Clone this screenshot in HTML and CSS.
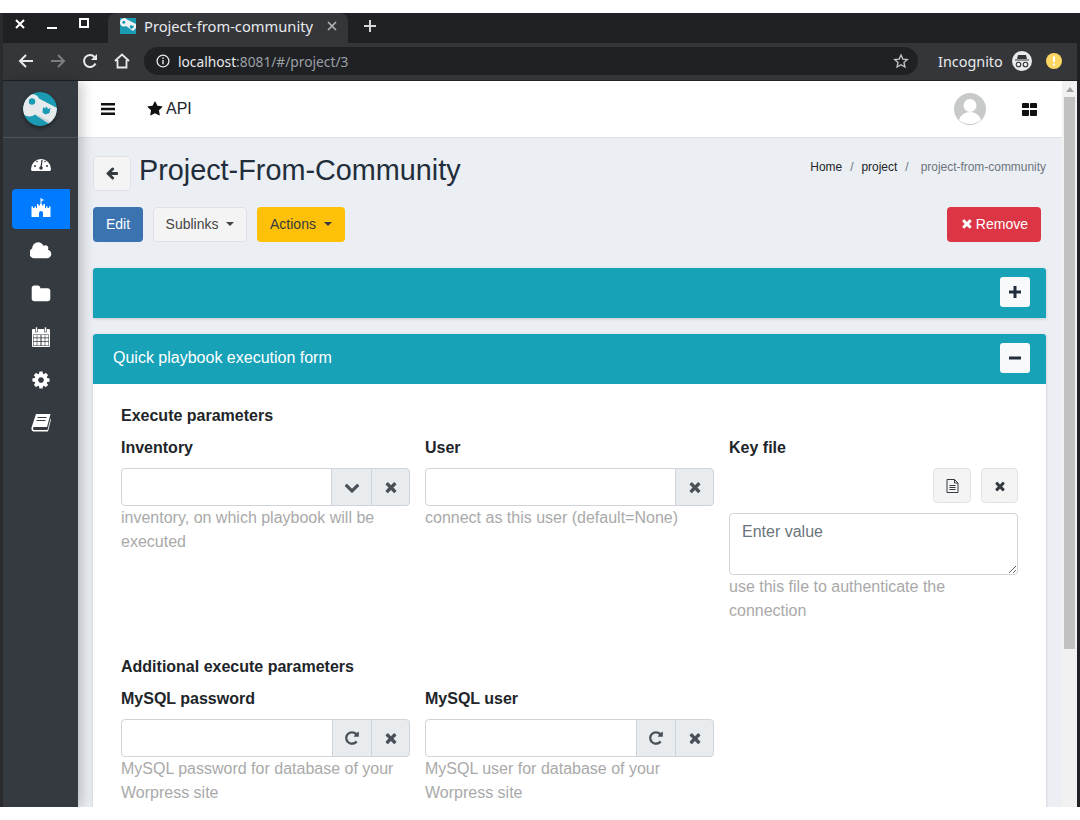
FILE: index.html

```html
<!DOCTYPE html>
<html lang="en">
<head>
<meta charset="utf-8"/>
<meta content="width=device-width, initial-scale=1.0" name="viewport"/>
<title>Project-from-community</title>
<link rel="stylesheet" href="styles.css">
</head>
<body>
<svg class="defs" width="0" height="0">
  <clipPath id="logo-clip"><circle cx="17" cy="17" r="17"/></clipPath>
  <symbol id="i-times" viewBox="0 0 1792 1792"><path d="M1490 1322q0 40-28 68l-136 136q-28 28-68 28t-68-28l-294-294-294 294q-28 28-68 28t-68-28l-136-136q-28-28-28-68t28-68l294-294-294-294q-28-28-28-68t28-68l136-136q28-28 68-28t68 28l294 294 294-294q28-28 68-28t68 28l136 136q28 28 28 68t-28 68l-294 294 294 294q28 28 28 68z"/></symbol>
  <symbol id="i-repeat" viewBox="0 0 1792 1792"><path d="M1664 256v448q0 26-19 45t-45 19h-448q-42 0-59-40-17-39 14-69l138-138q-148-137-349-137-104 0-198.500 40.500t-163.500 109.500-109.500 163.500-40.500 198.500 40.500 198.500 109.500 163.500 163.500 109.500 198.500 40.500q119 0 225-52t179-147q7-10 23-12 15 0 25 9l137 138q9 8 9.500 20.500t-7.500 22.500q-109 132-264 204.500t-327 72.500q-156 0-298-61t-245-164-164-245-61-298 61-298 164-245 245-164 298-61q147 0 284.500 55.500t244.500 156.500l130-129q29-31 70-14 39 17 39 59z"/></symbol>
  <symbol id="i-chevron" viewBox="0 0 1792 1792"><path d="M1683 808l-742 741q-19 19-45 19t-45-19l-742-741q-19-19-19-45.500t19-45.500l166-165q19-19 45-19t45 19l531 531 531-531q19-19 45-19t45 19l166 165q19 19 19 45.500t-19 45.500z"/></symbol>
  <symbol id="i-key" viewBox="0 0 34 34">
    <circle cx="17" cy="17" r="17" fill="#1a9bb3"/>
    <g clip-path="url(#logo-clip)">
      <path d="M1 10a8 8 0 0 1 15-3.500L36 17v3L28 33 12 22.500A8 8 0 0 1 1 10z" fill="#e6eaec"/>
      <path d="M36 20L28 33 14 24l1-1 13 7 7-12z" fill="#c9d3d6"/>
    </g>
    <circle cx="9" cy="9.500" r="3.200" fill="#1a9bb3"/>
    <path d="M20 15l2 1.500 1.500-2 1.500 2.500 2.500-1-1 5-4 1.500-3-2z" fill="#1a9bb3"/>
  </symbol>
</svg>

<div class="window">
  <div class="tabbar">
    <div class="win-controls">
      <svg width="12" height="12" viewBox="0 0 12 12"><path d="M2 2l8 8M10 2l-8 8" stroke="#fff" stroke-width="2"/></svg>
      <svg width="12" height="12" viewBox="0 0 12 12"><path d="M1 10h10" stroke="#fff" stroke-width="2"/></svg>
      <svg width="12" height="12" viewBox="0 0 12 12"><rect x="2" y="1" width="8" height="8" fill="none" stroke="#fff" stroke-width="2"/></svg>
    </div>
    <div class="tab">
      <svg class="favicon" width="16" height="16" viewBox="0 0 16 16">
        <rect width="16" height="16" fill="#1a9bb3"/>
        <path d="M0 4a4 4 0 0 1 7-2.500L16 6v4l-3 3-7-5A4 4 0 0 1 0 4z" fill="#eef2f3"/>
        <circle cx="3.800" cy="4.200" r="1.500" fill="#1a9bb3"/>
        <path d="M10 7l1 .8.800-1 .8 1.200 1.200-.5-.5 2.500-2 .8-1.500-1z" fill="#1a9bb3"/>
      </svg>
      <span class="tab-title">Project-from-community</span>
      <svg class="tab-close" width="10" height="10" viewBox="0 0 10 10"><path d="M1 1l8 8M9 1l-8 8" stroke="#b4b6b9" stroke-width="1.600"/></svg>
    </div>
    <svg class="new-tab" width="14" height="14" viewBox="0 0 14 14"><path d="M7 1v12M1 7h12" stroke="#d5d7da" stroke-width="2"/></svg>
  </div>

  <div class="toolbar">
    <svg class="tool" width="16" height="16" viewBox="0 0 16 16"><path d="M15 8H2M8 2L2 8l6 6" fill="none" stroke="#e8eaed" stroke-width="2"/></svg>
    <svg class="tool" width="16" height="16" viewBox="0 0 16 16"><path d="M1 8h13M8 2l6 6-6 6" fill="none" stroke="#7b7d80" stroke-width="2"/></svg>
    <svg class="tool" width="16" height="16" viewBox="0 0 16 16"><path d="M13.500 10.500A6 6 0 1 1 12.500 4" fill="none" stroke="#e8eaed" stroke-width="2"/><path d="M15 1v6H9z" fill="#e8eaed"/></svg>
    <svg class="tool" width="16" height="16" viewBox="0 0 16 16"><path d="M1 8l7-6.500L15 8M3.500 7v7.500h9V7" fill="none" stroke="#e8eaed" stroke-width="1.800"/></svg>
    <div class="omnibox">
      <svg width="14" height="14" viewBox="0 0 15 15"><circle cx="7.500" cy="7.500" r="6.300" fill="none" stroke="#e8eaed" stroke-width="1.400"/><path d="M7.500 6.500v4.500M7.500 3.800v1.500" stroke="#e8eaed" stroke-width="1.500"/></svg>
      <span class="url"><span class="url-host">localhost</span>:8081/#/project/3</span>
      <svg class="url-star" width="16" height="16" viewBox="0 0 24 24"><path d="M12 3l2.800 6.100 6.700.8-5 4.500 1.400 6.600L12 17.600 6.100 21l1.400-6.600-5-4.500 6.700-.8z" fill="none" stroke="#c4c6c9" stroke-width="2"/></svg>
    </div>
    <span class="incognito">Incognito</span>
    <svg class="spy" width="20" height="20" viewBox="0 0 20 20">
      <circle cx="10" cy="10" r="10" fill="#e8eaed"/>
      <path d="M6 4h8l1 4H5zM3 8.500h14v1H3z" fill="#35363a"/>
      <circle cx="6.500" cy="13.500" r="2.300" fill="none" stroke="#35363a" stroke-width="1.100"/>
      <circle cx="13.500" cy="13.500" r="2.300" fill="none" stroke="#35363a" stroke-width="1.100"/>
    </svg>
    <svg class="alert" width="16" height="16" viewBox="0 0 16 16"><circle cx="8" cy="8" r="8" fill="#fdd663"/><path d="M8 3.500v5.500M8 10.500v2" stroke="#fff" stroke-width="2"/></svg>
  </div>

  <div class="viewport">
    <aside class="sidebar">
      <div class="side-logo"><svg width="34" height="34"><use href="#i-key"/></svg></div>
      <nav class="side-nav">
        <a class="side-link">
          <svg width="20" height="14" viewBox="0 5 20 14"><path d="M0 16a10 10 0 0 1 20 0q0 1.500-1 2H1q-1-.5-1-2z" fill="#fff"/><path d="M10 15l1-8M3 13h2M15 13h2M5.500 8l1 1M14.500 8l-1 1" stroke="#343a40" stroke-width="1.300"/><circle cx="10" cy="15" r="1.800" fill="#343a40"/></svg>
        </a>
        <a class="side-link active">
          <svg width="20" height="20" viewBox="0 0 20 20"><path d="M9.500 0h1v1l3 1-3 1v3h-1z" fill="#fff"/><path d="M6 6h1.500v1.500H9V6h2v1.500h1.500V6H14v4h1V8.500h1.500V10H18V8.500h1.500V19H12v-4a2 2 0 0 0-4 0v4H.5V8.500H2V10h1.500V8.500H5V10h1z" fill="#fff"/></svg>
        </a>
        <a class="side-link">
          <svg width="22" height="22" viewBox="0 0 1920 1792"><path fill="#fff" d="M1856 1152q0 159-112.500 271.500t-271.500 112.500h-1088q-185 0-316.500-131.500t-131.500-316.500q0-132 71-241.500t187-163.500q-2-28-2-43 0-212 150-362t362-150q158 0 286.500 88t187.500 230q70-62 166-62 106 0 181 75t75 181q0 75-41 138 129 30 213 134.500t84 239.500z"/></svg>
        </a>
        <a class="side-link">
          <svg width="20" height="20" viewBox="0 0 1792 1792"><path fill="#fff" d="M1728 608v704q0 92-66 158t-158 66h-1216q-92 0-158-66t-66-158v-960q0-92 66-158t158-66h320q92 0 158 66t66 158v32h672q92 0 158 66t66 158z"/></svg>
        </a>
        <a class="side-link">
          <svg width="18" height="20" viewBox="0 0 18 20"><rect y="2" width="18" height="18" rx="1" fill="#fff"/><path d="M1 7.500h16V19H1z" fill="#343a40"/><path d="M1.500 8h3.200v2.500H1.500zM5.300 8h3.200v2.500H5.300zM9.500 8h3.200v2.500H9.500zM13.300 8h3.200v2.500h-3.200zM1.500 11.200h3.200v2.800H1.500zM5.300 11.200h3.200v2.800H5.300zM9.500 11.200h3.200v2.800H9.500zM13.300 11.200h3.200v2.800h-3.200zM1.500 14.800h3.200v3.700H1.500zM5.300 14.800h3.200v3.700H5.300zM9.500 14.800h3.200v3.700H9.500zM13.300 14.800h3.200v3.700h-3.200z" fill="#fff"/><path d="M3.500 0h2v5h-2zM12.500 0h2v5h-2z" fill="#fff" stroke="#343a40" stroke-width=".6"/></svg>
        </a>
        <a class="side-link">
          <svg width="20" height="20" viewBox="0 0 1792 1792"><path fill="#fff" d="M1152 896q0-106-75-181t-181-75-181 75-75 181 75 181 181 75 181-75 75-181zm512-109v222q0 12-8 23t-20 13l-185 28q-19 54-39 91 35 50 107 138 10 12 10 25t-9 23q-27 37-99 108t-94 71q-12 0-26-9l-138-108q-44 23-91 38-16 136-29 186-7 28-36 28h-222q-14 0-24.500-8.500t-11.500-21.500l-28-184q-49-16-90-37l-141 107q-10 9-25 9-14 0-25-11-126-114-165-168-7-10-7-23 0-12 8-23 15-21 51-66.500t54-70.500q-27-50-41-99l-183-27q-13-2-21-12.500t-8-23.500v-222q0-12 8-23t19-13l186-28q14-46 39-92-40-57-107-138-10-12-10-24 0-10 9-23 26-36 98.500-107.500t94.500-71.500q13 0 26 10l138 107q44-23 91-38 16-136 29-186 7-28 36-28h222q14 0 24.500 8.500t11.500 21.500l28 184q49 16 90 37l142-107q9-9 24-9 13 0 25 10 129 119 165 170 7 8 7 22 0 12-8 23-15 21-51 66.500t-54 70.500q26 50 41 98l183 28q13 2 21 12.500t8 23.500z"/></svg>
        </a>
        <a class="side-link">
          <svg width="20" height="18" viewBox="0 0 20 18"><path d="M5 0h14.500l-3.500 13H2.500q-1 2 0 3h14l3-11.500.5 1L17 17.500H2.500Q0 17 .5 13.500z" fill="#fff"/><path d="M6.500 3.500h9M5.500 6.500h9" stroke="#343a40" stroke-width="1"/></svg>
        </a>
      </nav>
    </aside>

    <main class="main">
      <header class="topnav">
        <div class="topnav-left">
          <svg class="bars" width="14" height="12" viewBox="0 0 14 12"><path d="M0 0h14v2.400H0zM0 4.800h14v2.400H0zM0 9.600h14V12H0z" fill="#111"/></svg>
          <span class="api">
            <svg width="16" height="16" viewBox="0 0 1792 1792"><path fill="#111" d="M1728 647q0 22-26 48l-363 354 86 500q1 7 1 20 0 21-10.500 35.500t-30.500 14.500q-19 0-40-12l-449-236-449 236q-22 12-40 12-21 0-31.500-14.500t-10.500-35.500q0-6 2-20l86-500-364-354q-25-27-25-48 0-37 56-46l502-73 225-455q19-41 49-41t49 41l225 455 502 73q56 9 56 46z"/></svg>
            API
          </span>
        </div>
        <div class="topnav-right">
          <svg class="avatar" width="32" height="32" viewBox="0 0 32 32">
            <circle cx="16" cy="16" r="16" fill="#c8caca"/>
            <circle cx="16" cy="12.500" r="6.500" fill="#fff"/>
            <path d="M5 27q3-8 11-8t11 8q-5 4-11 4T5 27z" fill="#fff"/>
          </svg>
          <svg class="grid-icon" width="15" height="13" viewBox="0 0 15 13"><path d="M0 1q0-1 1-1h5q1 0 1 1v4H0zM8 1q0-1 1-1h5q1 0 1 1v4H8zM0 7h7v5q0 1-1 1H1q-1 0-1-1zM8 7h7v5q0 1-1 1H9q-1 0-1-1z" fill="#111"/></svg>
        </div>
      </header>

      <div class="content">
        <div class="title-row">
          <div class="title-left">
            <button class="btn btn-back">
              <svg width="14" height="14" viewBox="0 0 1792 1792"><path fill="#343a40" d="M1664 896v128q0 53-32.500 90.500t-84.500 37.500h-704l293 294q38 36 38 90t-38 90l-75 76q-37 37-90 37-52 0-91-37l-651-652q-37-37-37-90 0-52 37-91l651-650q38-38 91-38 52 0 90 38l75 74q38 38 38 91t-38 91l-293 293h704q52 0 84.500 37.500t32.500 90.500z"/></svg>
            </button>
            <h1>Project-From-Community</h1>
          </div>
          <ol class="crumbs">
            <li>Home</li>
            <li class="sep">/</li>
            <li>project</li>
            <li class="sep">/</li>
            <li class="current">project-from-community</li>
          </ol>
        </div>

        <div class="actions-row">
          <div class="actions-left">
            <button class="btn btn-edit">Edit</button>
            <button class="btn btn-light caret">Sublinks</button>
            <button class="btn btn-warning caret">Actions</button>
          </div>
          <button class="btn btn-danger"><svg width="15" height="15"><use href="#i-times"/></svg>Remove</button>
        </div>

        <section class="card">
          <div class="card-head">
            <span></span>
            <button class="toggle"><svg width="12" height="12" viewBox="0 0 12 12"><path d="M4.500 0h3v4.500H12v3H7.500V12h-3V7.500H0v-3h4.500z" fill="#1f2d3d"/></svg></button>
          </div>
        </section>

        <section class="card">
          <div class="card-head">
            <span class="card-title">Quick playbook execution form</span>
            <button class="toggle"><svg width="12" height="12" viewBox="0 0 12 12"><path d="M0 4.500h12v3H0z" fill="#1f2d3d"/></svg></button>
          </div>
          <div class="card-body">
            <h3 class="group-title">Execute parameters</h3>
            <div class="field-grid">
              <div class="field">
                <label>Inventory</label>
                <div class="input-group">
                  <input type="text">
                  <span class="addon addon-wide"><svg width="16" height="16"><use href="#i-chevron"/></svg></span>
                  <span class="addon"><svg width="16" height="16"><use href="#i-times"/></svg></span>
                </div>
                <p class="help">inventory, on which playbook will be executed</p>
              </div>
              <div class="field">
                <label>User</label>
                <div class="input-group">
                  <input type="text">
                  <span class="addon"><svg width="16" height="16"><use href="#i-times"/></svg></span>
                </div>
                <p class="help">connect as this user (default=None)</p>
              </div>
              <div class="field">
                <label>Key file</label>
                <div class="file-btns">
                  <button class="btn btn-light btn-icon">
                    <svg width="13" height="14" viewBox="0 0 13 14"><path d="M1 .5h7.500L12 4v9.500H1zM8.500.5V4H12M3.500 6.500h6M3.500 8.500h6M3.500 10.500h6" fill="none" stroke="#343a40"/></svg>
                  </button>
                  <button class="btn btn-light btn-icon"><svg width="14" height="14"><use href="#i-times"/></svg></button>
                </div>
                <textarea placeholder="Enter value"></textarea>
                <p class="help">use this file to authenticate the connection</p>
              </div>
            </div>

            <h3 class="group-title group-next">Additional execute parameters</h3>
            <div class="field-grid">
              <div class="field">
                <label>MySQL password</label>
                <div class="input-group">
                  <input type="text">
                  <span class="addon addon-mid"><svg width="16" height="16"><use href="#i-repeat"/></svg></span>
                  <span class="addon"><svg width="16" height="16"><use href="#i-times"/></svg></span>
                </div>
                <p class="help">MySQL password for database of your Worpress site</p>
              </div>
              <div class="field">
                <label>MySQL user</label>
                <div class="input-group">
                  <input type="text">
                  <span class="addon addon-mid"><svg width="16" height="16"><use href="#i-repeat"/></svg></span>
                  <span class="addon"><svg width="16" height="16"><use href="#i-times"/></svg></span>
                </div>
                <p class="help">MySQL user for database of your Worpress site</p>
              </div>
            </div>
          </div>
        </section>
      </div>
    </main>

    <div class="scrollbar">
      <div class="scroll-up"></div>
      <div class="scroll-thumb"></div>
    </div>
  </div>
</div>
</body>
</html>
```

FILE: styles.css

```css
body { margin: 0; background: #fff; font-family: "Liberation Sans", Arial, sans-serif; font-size: 16px; color: #212529; overflow: hidden; }
.defs { position: absolute; }
button { font-family: inherit; }

.window { margin-top: 13px; height: 794px; display: flex; flex-direction: column; overflow: hidden; background: #202124; border-left: 3px solid #2a2b2e; border-right: 3px solid #202124; box-sizing: border-box; }

/* browser chrome */
.tabbar { height: 30px; flex: none; display: flex; align-items: center; background: #202124; }
.win-controls { width: 105px; flex: none; display: flex; gap: 20px; padding-left: 11px; box-sizing: border-box; margin-top: -8px; }
.tab { width: 240px; height: 30px; flex: none; display: flex; align-items: center; box-sizing: border-box; padding: 0 11px 4px 12px; background: #35363a; border-radius: 8px 8px 0 0; color: #e8eaed; }
.favicon { flex: none; }
.tab-title { margin-left: 8px; flex: 1; font-family: "Noto Sans", sans-serif; font-size: 14.7px; white-space: nowrap; }
.new-tab { margin: -4px 0 0 15px; }

.toolbar { height: 38px; flex: none; display: flex; align-items: center; background: #35363a; border-bottom: 1px solid #202124; box-sizing: border-box; padding: 0 0 1px 7px; }
.tool { margin: 0 8px; flex: none; }
.toolbar .tool + .tool { margin-left: 8px; }
.omnibox { margin-left: 6px; width: 774px; height: 28px; flex: none; display: flex; align-items: center; box-sizing: border-box; padding: 0 9px 0 12px; background: #202124; border-radius: 14px; }
.url { margin-left: 8px; flex: 1; font-family: "Noto Sans", sans-serif; font-size: 13.75px; color: #9aa0a6; }
.url-host { color: #e8eaed; }
.incognito { margin-left: 20px; font-family: "Noto Sans", sans-serif; font-size: 14.4px; color: #e8eaed; }
.spy { margin-left: 9px; flex: none; }
.alert { margin-left: 14px; flex: none; }

/* page */
.viewport { flex: 1; min-height: 0; display: flex; }
.sidebar { width: 75px; flex: none; background: #343a40; position: relative; z-index: 2; box-shadow: 4px 0 12px rgba(0, 0, 0, .22); }
.side-logo { height: 56px; display: flex; align-items: center; justify-content: center; border-bottom: 1px solid #4b545c; padding-right: 1px; }
.side-logo svg { border-radius: 50%; box-shadow: 0 2px 4px rgba(0, 0, 0, .4); }
.side-nav { padding: 8px 8px 0 9px; display: flex; flex-direction: column; gap: 3px; }
.side-link { height: 40px; box-sizing: border-box; padding-bottom: 2px; display: flex; align-items: center; justify-content: center; border-radius: 4px 0 0 4px; }
.side-link.active { background: #007bff; }

.main { flex: 1; min-width: 0; background: #ebeef3; overflow: hidden; }
.topnav { height: 57px; box-sizing: border-box; display: flex; justify-content: space-between; align-items: center; background: #fff; border-bottom: 1px solid #dee2e6; padding: 0 25px 0 23px; }
.topnav-left { display: flex; align-items: center; gap: 32px; }
.api { display: flex; align-items: center; gap: 3px; color: #212529; }
.topnav-right { display: flex; align-items: center; gap: 36px; }

.content { padding: 17px 16px 0 15px; }
.title-row { display: flex; justify-content: space-between; align-items: center; height: 36px; }
.title-left { display: flex; align-items: center; gap: 8px; }
h1 { margin: 0; padding-bottom: 6px; font-size: 28.8px; font-weight: 400; color: #212d3b; }
.crumbs { list-style: none; display: flex; gap: 8px; margin: 0; padding: 0 0 12px; font-size: 11.95px; color: #212529; }
.crumbs .sep, .crumbs .current { color: #6c757d; }
.crumbs .current { margin-left: 4px; }

.btn { box-sizing: border-box; height: 35px; padding: 0 12px; font-size: 14px; border: 1px solid transparent; border-radius: 4px; display: inline-flex; align-items: center; justify-content: center; cursor: pointer; }
.btn-back { width: 38px; padding: 0; background: #f4f4f4; border-color: #dee2e6; }
.btn-edit { background: #3b73b0; color: #fff; width: 50px; }
.btn-light { background: #f4f4f4; border-color: #dee2e6; color: #444; }
.btn-warning { background: #ffc107; color: #343a40; }
.btn-danger { background: #dc3545; color: #fff; gap: 2px; width: 94px; fill: #fff; }
.caret::after { content: ""; margin-left: 8px; border-top: 4px solid currentColor; border-left: 4px solid transparent; border-right: 4px solid transparent; }
.actions-row { margin-top: 16px; margin-right: 5px; display: flex; justify-content: space-between; }
.actions-row .btn { padding-bottom: 2px; }
.actions-left { display: flex; gap: 10px; }
.actions-left .btn-light { width: 94px; }
.actions-left .btn-warning { width: 88px; }

.card { margin-top: 16px; box-shadow: 0 1px 3px rgba(0, 0, 0, .15); }
.actions-row + .card { margin-top: 26px; }
.card-head { height: 50px; box-sizing: border-box; display: flex; justify-content: space-between; align-items: center; padding: 0 16px 3px 20px; background: #17a2b8; border-radius: 3px 3px 0 0; color: #fff; }
.card-title { font-size: 16px; }
.toggle { width: 30px; height: 30px; padding: 0; border: 0; border-radius: 3px; background: #f8f9fa; display: flex; align-items: center; justify-content: center; }
.card-body { background: #fff; padding: 20px 28px 60px; }
.group-title { margin: 0; font-size: 16px; line-height: 24px; font-weight: 700; }
.group-next { margin-top: 32px; }
.field-grid { margin-top: 8px; display: grid; grid-template-columns: repeat(3, 289px); gap: 15px; }
.field label { display: block; font-weight: 700; line-height: 24px; margin-bottom: 8px; }
.help { margin: 0; line-height: 24px; color: #a9a9a9; }

.input-group { display: flex; height: 38px; }
.input-group input { flex: 1; min-width: 0; box-sizing: border-box; height: 38px; border: 1px solid #ced4da; border-radius: 4px 0 0 4px; background: #fff; }
.addon { box-sizing: border-box; width: 39px; flex: none; display: flex; align-items: center; justify-content: center; background: #e9ecef; border: 1px solid #ced4da; margin-left: -1px; fill: #495057; }
.addon-wide { width: 41px; }
.addon-mid { width: 40px; }
.addon:last-child { border-radius: 0 4px 4px 0; }

.file-btns { display: flex; justify-content: flex-end; gap: 10px; }
.btn-icon { width: 38px; padding: 0; fill: #343a40; }
.file-btns .btn-icon:last-child { width: 37px; }
textarea { display: block; margin-top: 10px; box-sizing: border-box; width: 289px; height: 62px; padding: 6px 12px; border: 1px solid #ced4da; border-radius: 4px; font-family: inherit; font-size: 16px; line-height: 24px; }
textarea::placeholder { color: #6c757d; opacity: 1; }

.scrollbar { width: 15px; flex: none; background: #f1f1f1; display: flex; flex-direction: column; align-items: center; }
.scroll-up { margin-top: 6px; border-bottom: 5px solid #a3a3a3; border-left: 4px solid transparent; border-right: 4px solid transparent; }
.scroll-thumb { margin-top: 5px; width: 11px; height: 552px; background: #c1c1c1; }
```
